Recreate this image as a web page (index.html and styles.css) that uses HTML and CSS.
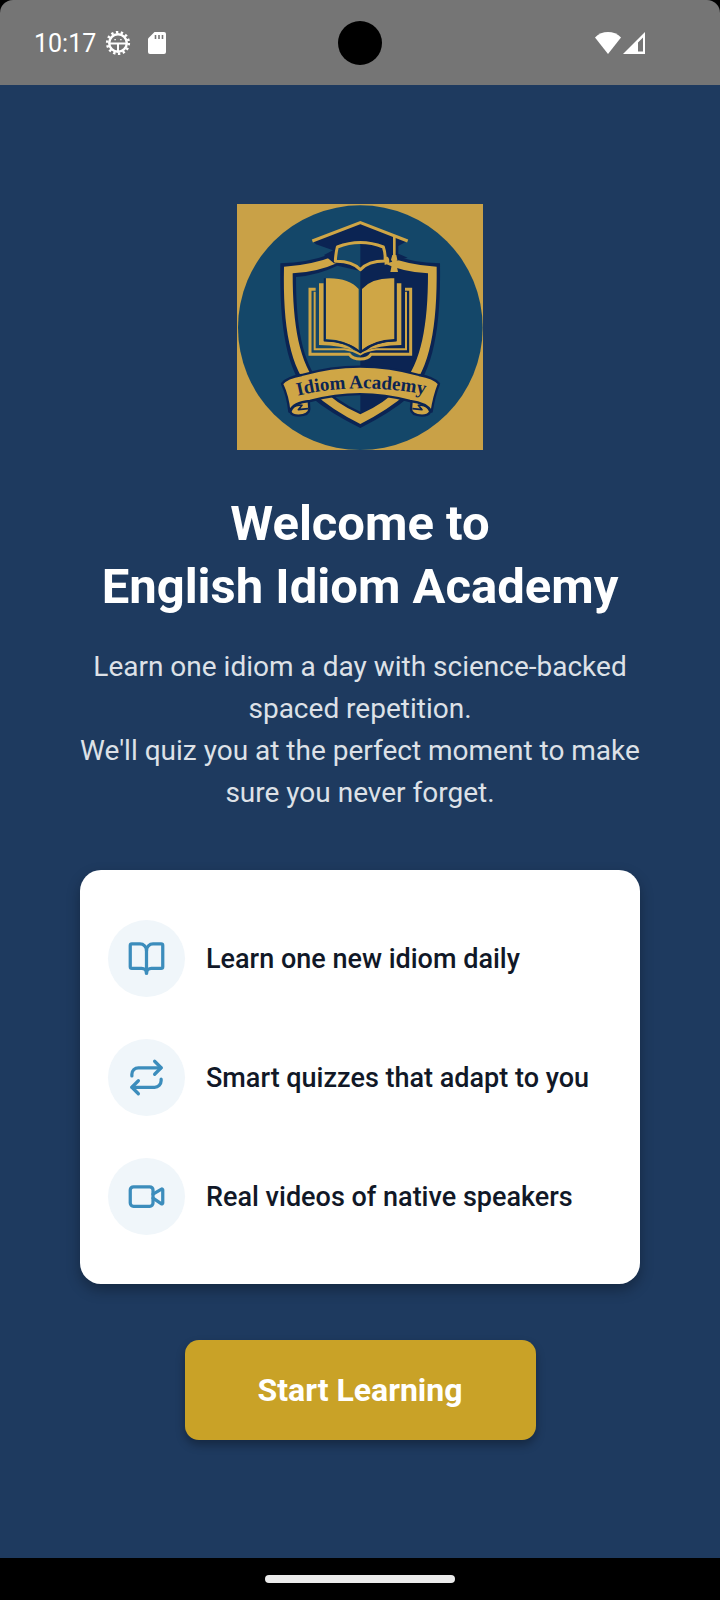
FILE: index.html
```html
<!DOCTYPE html>
<html lang="en">
<head>
    <meta charset="UTF-8">
    <meta name="viewport" content="width=device-width, initial-scale=1.0">
    <title>English Idiom Academy</title>
    <link rel="stylesheet" href="styles.css">
</head>
<body>
    <div class="screen">
        <header class="status-bar">
            <div class="status-left">
                <span class="clock">10:17</span>
                <svg class="gear-icon" width="24" height="24" viewBox="0 0 24 24" fill="none" stroke="#fff">
                    <circle cx="12" cy="12" r="8.8" stroke-width="2.4"/>
                    <circle cx="12" cy="12" r="10.8" stroke-width="2.6" stroke-dasharray="2.4 2.447"/>
                    <path d="M4 12.4h16M12 12.4V20" stroke-width="2"/>
                    <path d="M8.4 8.6h1.4M14.2 8.6h1.4" stroke-width="1.4"/>
                </svg>
                <svg width="18" height="22" viewBox="0 0 18 22">
                    <path fill="#fff" d="M6.500 0H16a2 2 0 0 1 2 2v18a2 2 0 0 1-2 2H2a2 2 0 0 1-2-2V6.500z"/>
                    <path stroke="#757575" stroke-width="1.600" d="M7.500 3v4M11 3v4M14.500 3v4"/>
                </svg>
            </div>
            <div class="camera"></div>
            <div class="status-right">
                <svg width="26" height="22" viewBox="0 0 26 22">
                    <path fill="#fff" d="M0 5.500C7-1.800 19-1.800 26 5.500L13 22z"/>
                </svg>
                <svg width="22" height="22" viewBox="0 0 22 22">
                    <path fill="#fff" fill-rule="evenodd" d="M22 0v22H0zM20 5.500l-5 5V19.500h5z"/>
                </svg>
            </div>
        </header>

        <main class="welcome">
            <svg class="logo" viewBox="21 27 738 738" role="img" aria-label="Idiom Academy">
                <rect x="21" y="27" width="738" height="738" fill="#c9a147"/>
                <circle cx="391" cy="398" r="367" fill="#144769"/>

                <!-- shield -->
                <path fill="#0b2453" d="M151 205Q235 203 300 178H482Q545 203 630 205C633 400 610 530 540 604Q480 655 391 699Q300 655 240 604C170 530 148 400 151 205z"/>
                <path fill="#cfa646" d="M162 215Q245 210 316 182H466Q535 210 620 215C622 395 600 520 535 592Q475 645 391 687Q305 645 248 592C180 520 158 395 162 215z"/>
                <path fill="#0b2453" d="M188 235Q260 232 322 204H460Q522 232 594 235C594 390 574 505 515 572Q465 624 391 658Q315 624 266 572C208 505 188 390 188 235z"/>
                <path fill="#144769" d="M198 246Q265 240 322 212L391 228V650Q320 618 272 566C216 500 198 390 198 246z"/>

                <!-- cap -->
                <path fill="#0b2453" d="M247 137L391 80L533 137L505 153V176L533 188L470 205L391 222L312 205L282 180L309 166L258 148z"/>
                <path fill="#144769" d="M325 154Q355 143 391 144V226Q362 198 318 196z"/>
                <path fill="none" stroke="#cfa646" stroke-width="9" d="M247 138L391 83L533 138"/>
                <path fill="none" stroke="#cfa646" stroke-width="9" stroke-linejoin="round" d="M322 156Q391 129 460 156Q467 176 465 198Q414 198 391 224Q366 198 316 199Q317 176 322 156z"/>
                <path fill="none" stroke="#cfa646" stroke-width="8" d="M493 126V184"/>
                <path fill="#cfa646" d="M487 180h12l3 14-4 7 6 30h-23l6-30-4-7zM464 185h9q7 7 4 20l-13 5z"/>

                <!-- book -->
                <path fill="none" stroke="#cfa646" stroke-width="9" d="M257 283H240V478H358Q368 492 391 492Q414 492 423 478H542V283H525"/>
                <path fill="none" stroke="#cfa646" stroke-width="6" d="M254 290V463H344Q370 466 391 478Q412 466 438 463H528V290"/>
                <path fill="#cfa646" d="M267 265H281V438Q345 440 378 470Q335 450 267 450zM514 265H500V438Q437 440 403 470Q446 450 514 450z"/>
                <path fill="#cfa646" d="M288 250Q355 247 386 282V467Q350 434 288 432zM493 250Q427 247 396 282V467Q430 434 493 432z"/>
                <path fill="none" stroke="#0b2453" stroke-width="5" d="M284 250V437Q352 438 391 472Q430 438 497 437V250"/>

                <!-- ribbon -->
                <g fill="#cfa646" stroke="#0b2453" stroke-width="7" stroke-linejoin="round">
                    <path d="M183 618Q168 662 205 662Q238 660 238 642L236 616z"/>
                    <path d="M598 618Q613 662 576 662Q543 660 543 642L545 616z"/>
                    <path d="M156 566Q170 548 215 540Q390 490 567 540Q612 548 627 566Q612 604 605 650Q590 624 540 618Q390 577 240 618Q190 622 178 650Q174 604 156 566z"/>
                    <path fill="none" stroke-width="5" d="M182 650Q190 626 216 631L205 644L234 641M600 650Q591 626 565 631L576 644L547 641"/>
                </g>
                <path id="ribbon-line" fill="none" d="M203 602Q394 556 620 606"/>
                <text class="ribbon-text"><textPath href="#ribbon-line">Idiom Academy</textPath></text>
            </svg>

            <h1 class="title">Welcome to<br>English Idiom Academy</h1>
            <p class="subtitle">Learn one idiom a day with science-backed spaced repetition.<br>We'll quiz you at the perfect moment to make sure you never forget.</p>

            <ul class="features">
                <li class="feature">
                    <span class="feature-icon">
                        <svg viewBox="0 0 24 24"><path d="M12 7v14"/><path d="M3 18a1 1 0 0 1-1-1V4a1 1 0 0 1 1-1h5a4 4 0 0 1 4 4 4 4 0 0 1 4-4h5a1 1 0 0 1 1 1v13a1 1 0 0 1-1 1h-6a3 3 0 0 0-3 3 3 3 0 0 0-3-3z"/></svg>
                    </span>
                    <span>Learn one new idiom daily</span>
                </li>
                <li class="feature">
                    <span class="feature-icon">
                        <svg viewBox="0 0 24 24"><path d="m17 2 4 4-4 4"/><path d="M3 11v-1a4 4 0 0 1 4-4h14"/><path d="m7 22-4-4 4-4"/><path d="M21 13v1a4 4 0 0 1-4 4H3"/></svg>
                    </span>
                    <span>Smart quizzes that adapt to you</span>
                </li>
                <li class="feature">
                    <span class="feature-icon">
                        <svg viewBox="0 0 24 24"><path d="m16 13 5.223 3.482a.5.5 0 0 0 .777-.416V7.870a.5.5 0 0 0-.752-.432L16 10.500"/><rect x="2" y="6" width="14" height="12" rx="2"/></svg>
                    </span>
                    <span>Real videos of native speakers</span>
                </li>
            </ul>

            <button type="button" class="start-button">Start Learning</button>
        </main>

        <footer class="nav-bar"><div class="nav-handle"></div></footer>
    </div>
</body>
</html>
```

FILE: styles.css
```css
* {
    box-sizing: border-box;
}
body {
    margin: 0;
    background: #000;
    color: #fff;
    font-family: Roboto, sans-serif;
}
.screen {
    min-height: 100vh;
    display: flex;
    flex-direction: column;
}
.status-bar {
    display: grid;
    grid-template-columns: 1fr auto 1fr;
    align-items: center;
    height: 85px;
    padding: 0 34px;
    background: #757575;
    border-radius: 13px 13px 0 0;
}
.status-left,
.status-right {
    display: flex;
    align-items: center;
}
.clock {
    font-size: 25px;
    line-height: 30px;
    padding-top: 2px;
}
.gear-icon {
    margin: 0 18px 0 10px;
    overflow: visible;
}
.camera {
    width: 44px;
    height: 44px;
    border-radius: 50%;
    background: #000;
}
.status-right {
    justify-content: flex-end;
    gap: 2px;
    padding-right: 41px;
}
.welcome {
    flex: 1;
    display: flex;
    flex-direction: column;
    align-items: center;
    justify-content: center;
    padding: 29px 80px 28px;
    background: #1e3a5f;
}
.logo {
    width: 246px;
    height: 246px;
    margin-bottom: 42px;
}
.ribbon-text {
    font-family: "Liberation Serif", serif;
    font-size: 57px;
    font-weight: bold;
    fill: #0b2453;
}
.title {
    margin: 0 0 28px;
    font-size: 49px;
    line-height: 63px;
    font-weight: 700;
    text-align: center;
}
.subtitle {
    margin: 0 0 56px;
    color: #dde1e7;
    font-size: 28px;
    line-height: 42px;
    text-align: center;
}
.features {
    width: 100%;
    max-width: 700px;
    margin: 0 0 56px;
    padding: 29px 28px 28px;
    list-style: none;
    background: #fff;
    border-radius: 21px;
    box-shadow: 0 6px 14px rgba(0, 0, 0, 0.3);
}
.feature {
    display: flex;
    align-items: center;
    gap: 21px;
    padding: 21px 0;
    color: #111827;
    font-size: 27px;
    font-weight: 500;
}
.feature-icon {
    flex: none;
    display: flex;
    align-items: center;
    justify-content: center;
    width: 77px;
    height: 77px;
    border-radius: 50%;
    background: #f0f6fa;
}
.feature-icon svg {
    width: 39px;
    height: 39px;
    fill: none;
    stroke: #3c8dbc;
    stroke-width: 2;
    stroke-linecap: round;
    stroke-linejoin: round;
}
.start-button {
    padding: 31px 73px;
    border: none;
    border-radius: 14px;
    background: #c9a227;
    color: #fff;
    font-family: inherit;
    font-size: 32px;
    line-height: 38px;
    font-weight: 700;
    box-shadow: 0 5px 10px rgba(0, 0, 0, 0.3);
    cursor: pointer;
}
.nav-bar {
    display: flex;
    align-items: center;
    justify-content: center;
    height: 42px;
}
.nav-handle {
    width: 190px;
    height: 8px;
    border-radius: 4px;
    background: #ebebeb;
}
```
